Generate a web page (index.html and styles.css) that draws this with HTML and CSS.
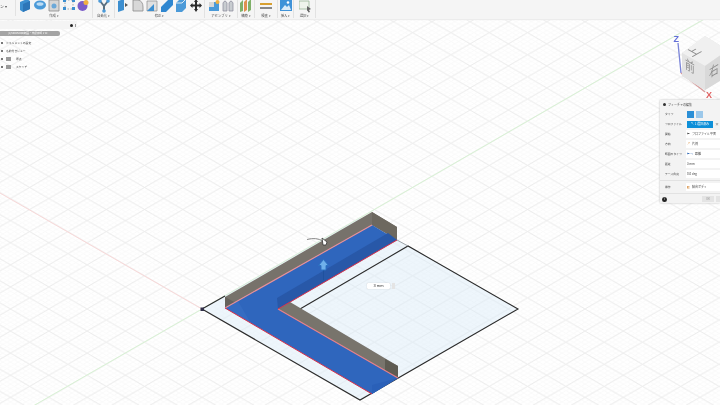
FILE: index.html
```html
<!DOCTYPE html>
<html lang="ja">
<head>
<meta charset="utf-8">
<title>フィーチャの編集</title>
<link rel="stylesheet" href="styles.css">
</head>
<body>
<div class="app">
  <svg class="canvas" viewBox="0 0 720 405" width="720" height="405">
    <defs>
      <pattern id="minor" patternUnits="userSpaceOnUse" x="202" y="309" width="7.66" height="4.42">
        <path d="M0 0L7.66 4.42M7.66 0L0 4.42" stroke="#f8f8f8" stroke-width=".8" fill="none"/>
      </pattern>
      <pattern id="major" patternUnits="userSpaceOnUse" x="202" y="309" width="38.3" height="22.1">
        <path d="M0 0L38.3 22.1M38.3 0L0 22.1" stroke="#ebebeb" stroke-width=".9" fill="none"/>
      </pattern>
    </defs>
    <rect width="720" height="405" fill="#fff"/>
    <rect width="720" height="405" fill="url(#minor)"/>
    <rect width="720" height="405" fill="url(#major)"/>
    <path d="M0 425L202 309L720 10" stroke="#d8f2d4" stroke-width="1" fill="none"/>
    <path d="M0 193L202 309" stroke="#f8d8d8" stroke-width="1" fill="none"/>

    <path d="M202 309L360 218L518 309L360 400Z" fill="#d6e9f9" fill-opacity=".42"/>
    <path d="M202 309L225 296M202 309L360 400L518 309L408 246L300 309" stroke="#2b2b2b" stroke-width="1.1" fill="none"/>
    <path d="M397 240L408 246" stroke="#8a8f94" stroke-width=".8" fill="none"/>
    <path d="M300 309L372 351" stroke="#c6d0d8" stroke-width=".7" fill="none"/>

    <path d="M225 297L372 212L397 227V240L372 225L225 308Z" fill="#77726b"/>
    <path d="M372 212L397 227V240L386 233L372 225Z" fill="#6d685f"/>
    <path d="M225 297L238 304L225 308Z" fill="#66625c"/>
    <path d="M278 309L290 302L398 366V378Z" fill="#78746c"/>
    <path d="M385 359L398 366V378L385 371Z" fill="#5e5b52"/>

    <path d="M225 308L372 225L397 240L278 309L398 378L372 394Z" fill="#2f66bd"/>
    <path d="M277 298L388 233L397 240L278 309Z" fill="#2858a8"/>
    <path d="M372 394V385L398 378Z" fill="#2a60b8"/>
    <path d="M225 308L238 301L250 322Z" fill="#3a70c4" fill-opacity=".6"/>

    <path d="M225 308L372 225" stroke="#e88f98" stroke-width="1.1" fill="none"/>
    <path d="M278 309L398 378" stroke="#e87f88" stroke-width="1.1" fill="none"/>
    <path d="M225 308L372 394M278 309L397 240" stroke="#d9304a" stroke-width="1" fill="none"/>

    <rect x="200.500" y="307.500" width="3.500" height="3.500" fill="#33304a"/>

    <path d="M307 239.500Q316 237 323 241" stroke="#888" stroke-width="1" fill="none"/>
    <path d="M322 238L327 242L326 245H323Z" fill="#fff" stroke="#333" stroke-width=".8"/>
    <path d="M323.500 270V280" stroke="#1d4f9c" stroke-width=".8"/>
    <path d="M323.500 259.500L328.500 265.500H326V270H321V265.500H318.500Z" fill="#6fb0ea" stroke="#2a6fc0" stroke-width=".9"/>

    <path d="M678 43L681 73" stroke="#7a84d8" stroke-width="1.300" fill="none"/>
    <path d="M681 73L705 92" stroke="#d99a9a" stroke-width="1.300" fill="none"/>
    <path d="M682 53L705 36L728 50V76L705 90L682 76Z" fill="#e4e4e4"/>
    <path d="M682 53L705 36L728 50L705 66Z" fill="#f0f0f0"/>
    <path d="M682 53L705 66V90L682 76Z" fill="#e3e3e3"/>
    <path d="M705 66L728 50V76L705 90Z" fill="#d9d9d9"/>
    <text class="axis axis-z" x="673.500" y="42">Z</text>
    <text class="axis axis-x" x="706" y="98">X</text>
    <text class="cube" transform="matrix(.8 -.45 .8 .45 697 54)">上</text>
    <text class="cube" transform="matrix(.75 .45 0 1 690 71)">前</text>
    <text class="cube" transform="matrix(.75 -.45 0 1 714 75)">右</text>
  </svg>

  <header class="toolbar">
    <div class="mode"><span class="mode-text">ン ▾</span></div>
    <section class="group g-create">
      <div class="icons">
        <svg class="ico" viewBox="0 0 12 14"><path d="M1 3L8 0L11 2V10L4 13L1 11Z" fill="#3d8fd0"/><path d="M4 5L11 2V10L4 13Z" fill="#2d76b8"/></svg>
        <svg class="ico" viewBox="0 0 12 14"><ellipse cx="6" cy="6" rx="6" ry="4.500" fill="#4b9ad8"/><ellipse cx="6" cy="5" rx="3.500" ry="1.800" fill="#bcdcf4"/></svg>
        <svg class="ico" viewBox="0 0 12 14"><path d="M1 1H11V12H1Z" fill="#d6d6d6" stroke="#8c8c8c" stroke-width=".8"/><circle cx="6" cy="7" r="2.500" fill="#6ba8d8"/></svg>
        <svg class="ico" viewBox="0 0 12 14"><path d="M2 1H10V10H2Z" fill="none" stroke="#777" stroke-width=".6" stroke-dasharray="1.500 1.500"/><path d="M0 0H3V3H0ZM9 0H12V3H9ZM0 8H3V11H0ZM9 8H12V11H9Z" fill="#3d8fd0"/></svg>
        <svg class="ico" viewBox="0 0 12 14"><circle cx="5.500" cy="7" r="5" fill="#7a5cc8"/><circle cx="9" cy="3.500" r="2.500" fill="#f0b040"/></svg>
      </div>
      <span class="lab">作成 ▾</span>
    </section>
    <section class="group g-auto">
      <div class="icons">
        <svg class="ico" viewBox="0 0 12 14"><path d="M2 2L6 7L10 2M6 7V12" stroke="#5a6f80" stroke-width="2" fill="none"/><circle cx="2" cy="2" r="1.800" fill="#4b9ad8"/><circle cx="10" cy="2" r="1.800" fill="#4b9ad8"/><circle cx="6" cy="12" r="1.800" fill="#4b9ad8"/></svg>
      </div>
      <span class="lab">自動化 ▾</span>
    </section>
    <section class="group g-modify">
      <div class="icons">
        <svg class="ico" viewBox="0 0 12 14"><path d="M1 2L7 0V11L1 13Z" fill="#3d8fd0"/><path d="M8 4L11 6L8 8Z" fill="#555"/></svg>
        <svg class="ico" viewBox="0 0 12 14"><path d="M1 1H6Q11 2 11 8V12H1Z" fill="#d8d8d8" stroke="#8c8c8c" stroke-width=".8"/></svg>
        <svg class="ico" viewBox="0 0 12 14"><path d="M1 2H11V12H1Z" fill="#e0e0e0" stroke="#8c8c8c" stroke-width=".7"/><path d="M1 12L8 5V12Z" fill="#3d8fd0"/></svg>
        <svg class="ico" viewBox="0 0 12 14"><path d="M0 8L7 1H12V6L5 13H0Z" fill="#2f87d0"/></svg>
        <svg class="ico" viewBox="0 0 12 14"><path d="M1 4L5 0H11V9L7 13H1Z" fill="#4b9ad8"/><path d="M1 4H7L11 0" stroke="#dfeaf3" fill="none"/></svg>
        <svg class="ico" viewBox="0 0 12 14"><path d="M6 0L8 3H7V5.500H9.500V4L12 6.500L9.500 9V7.500H7V10H8L6 13L4 10H5V7.500H2.500V9L0 6.500L2.500 4V5.500H5V3H4Z" fill="#2b2b2b"/></svg>
      </div>
      <span class="lab">修正 ▾</span>
    </section>
    <section class="group g-assemble">
      <div class="icons">
        <svg class="ico" viewBox="0 0 12 14"><path d="M1 3H11V12H1Z" fill="#4b9ad8"/><path d="M1 3H6V8H1Z" fill="#d8d8d8"/><circle cx="9.500" cy="3" r="2" fill="#f0b040"/></svg>
        <svg class="ico" viewBox="0 0 12 14"><path d="M1 4Q3 0 5 4V12H1ZM7 4Q9 0 11 4V12H7Z" fill="#c8ccd0" stroke="#889" stroke-width=".7"/></svg>
      </div>
      <span class="lab">アセンブリ ▾</span>
    </section>
    <section class="group g-build">
      <div class="icons">
        <svg class="ico" viewBox="0 0 12 14"><path d="M0 4L3 1V12L0 13Z" fill="#7fb069"/><path d="M4 3L7 0V11L4 13Z" fill="#e09050"/><path d="M8 3L11 0V11L8 13Z" fill="#7fb069"/></svg>
      </div>
      <span class="lab">構築 ▾</span>
    </section>
    <section class="group g-inspect">
      <div class="icons">
        <svg class="ico" viewBox="0 0 12 14"><path d="M0 4H12V6H0Z" fill="#d8a030"/><path d="M0 8H12V10H0Z" fill="#888"/></svg>
      </div>
      <span class="lab">検査 ▾</span>
    </section>
    <section class="group g-insert">
      <div class="icons">
        <svg class="ico" viewBox="0 0 12 14"><path d="M0 0H12V12H0Z" fill="#3f93d8"/><path d="M1 11L5 6L7 8L9 6L11 11Z" fill="#dcecf8"/><circle cx="8" cy="3.500" r="1.300" fill="#fff"/></svg>
      </div>
      <span class="lab">挿入 ▾</span>
    </section>
    <section class="group g-select">
      <div class="icons">
        <svg class="ico" viewBox="0 0 12 14"><path d="M0 2H10V10H0Z" fill="#eef4ec" stroke="#9ab89a" stroke-width=".8"/><path d="M8 7L12 10L10 11L11 13L9.500 13.500L8.500 11.500L8 12Z" fill="#666"/></svg>
      </div>
      <span class="lab">選択 ▾</span>
    </section>
  </header>

  <aside class="browser">
    <div class="search"><span class="dot"></span><span class="sep"></span></div>
    <div class="doc"><span class="doc-name">(1)600X600凹断面・未保存版 1 v2</span></div>
    <ul class="tree">
      <li class="node"><span class="eye"></span>ドキュメントの設定</li>
      <li class="node"><span class="eye"></span>名前付きビュー</li>
      <li class="node"><span class="eye"></span><span class="folder"></span>原点</li>
      <li class="node"><span class="eye"></span><span class="folder"></span>スケッチ</li>
    </ul>
  </aside>

  <div class="dim"><span class="dim-box">3 mm</span><span class="dim-end"></span></div>

  <aside class="panel">
    <div class="title"><span class="bullet"></span>フィーチャの編集</div>
    <div class="row"><span class="key">タイプ</span>
      <span class="val bare"><span class="type on"></span><span class="type"></span></span></div>
    <div class="row"><span class="key">プロファイル</span>
      <span class="val bare"><span class="chosen">↖ 1 選択済み</span><span class="cross">×</span></span></div>
    <div class="row"><span class="key">開始</span><span class="val"><i class="mini">⊢</i>プロファイル平面</span></div>
    <div class="row"><span class="key">方向</span><span class="val"><i class="mini warm">↗</i>片側</span></div>
    <div class="row"><span class="key">範囲のタイプ</span><span class="val"><i class="mini blue">⊢⊣</i>距離</span></div>
    <div class="row"><span class="key">距離</span><span class="val">3 mm</span></div>
    <div class="row"><span class="key">テーパ角度</span><span class="val">0.0 deg</span></div>
    <div class="rule"></div>
    <div class="row"><span class="key">操作</span><span class="val"><i class="mini warm">◧</i>結合ボディ</span></div>
    <div class="rule"></div>
    <div class="foot"><span class="info">i</span><span class="ok">OK</span><span class="cancel"></span></div>
  </aside>
</div>
</body>
</html>
```
FILE: styles.css
```css
html, body {
  margin: 0;
  padding: 0;
  background: #fff;
}
.app {
  position: relative;
  width: 720px;
  height: 405px;
  overflow: hidden;
  font-family: "Noto Sans CJK JP", "Noto Sans", sans-serif;
}
.canvas {
  position: absolute;
  inset: 0;
  display: block;
  filter: blur(.55px);
}
.axis {
  font: 700 9px "Liberation Sans", sans-serif;
}
.axis-z { fill: #6470d8; }
.axis-x { fill: #e06060; }
.cube {
  font: 400 13px "Noto Sans CJK JP", sans-serif;
  fill: #8a8a8a;
  text-anchor: middle;
}

.toolbar {
  position: absolute;
  top: 0;
  left: 0;
  width: 720px;
  height: 19px;
  background: #f5f5f5;
  display: flex;
  align-items: flex-start;
  filter: blur(.55px);
  box-shadow: 0 1px 1px #ececec;
}
.mode {
  width: 16px;
  height: 16px;
  border-right: 1px solid #e2e2e2;
  font-size: 4px;
  color: #555;
  overflow: hidden;
  box-sizing: border-box;
  padding-top: 3px;
  white-space: nowrap;
}
.group {
  display: flex;
  flex-direction: column;
  align-items: center;
  flex: none;
  height: 18px;
  border-right: 1px solid #e2e2e2;
  box-sizing: border-box;
}
.g-create { width: 77px; }
.g-auto { width: 22px; }
.g-modify { width: 90px; }
.g-assemble { width: 33px; }
.g-build { width: 17px; }
.g-inspect { width: 23px; }
.g-insert { width: 16px; }
.g-select { width: 22px; }
.icons {
  display: flex;
  gap: 2.5px;
  height: 14px;
  margin-top: -1px;
}
.ico {
  width: 12px;
  height: 14px;
  display: block;
}
.lab {
  font-size: 3.4px;
  line-height: 5px;
  color: #555;
  white-space: nowrap;
}

.browser {
  position: absolute;
  top: 21px;
  left: 0;
  width: 78px;
  font-size: 2.8px;
  color: #444;
  filter: blur(.35px);
}
.search {
  height: 8px;
  background: #f4f4f4;
  display: flex;
  align-items: center;
  justify-content: flex-end;
  gap: 2px;
  padding-right: 1px;
  width: 76px;
}
.dot {
  width: 3px;
  height: 3px;
  border-radius: 50%;
  background: #222;
}
.sep {
  width: 1px;
  height: 3px;
  background: #999;
}
.doc {
  width: 60px;
  height: 5px;
  margin-top: 2px;
  background: #a4a4a4;
  color: #fff;
  line-height: 5px;
  white-space: nowrap;
  overflow: hidden;
  padding-left: 8px;
  box-sizing: border-box;
  border-radius: 0 2px 2px 0;
}
.doc-name {
  font-size: 2.6px;
}
.tree {
  list-style: none;
  margin: 3px 0 0;
  padding: 0;
}
.node {
  height: 8px;
  display: flex;
  align-items: center;
  gap: 1px;
  padding-left: 1px;
  white-space: nowrap;
}
.eye {
  width: 2px;
  height: 2px;
  margin-right: 2px;
  background: #777;
}
.folder {
  width: 5px;
  height: 4px;
  margin-right: 4px;
  background: #9a9a9a;
}

.dim {
  position: absolute;
  left: 367px;
  top: 283px;
  display: flex;
  gap: 2px;
  filter: blur(.3px);
}
.dim-box {
  width: 23px;
  height: 6px;
  background: #fff;
  border-radius: 1px;
  box-shadow: 0 0 1px #aaa;
  font: 4px/6px "Liberation Sans", sans-serif;
  text-align: center;
  color: #333;
}
.dim-end {
  width: 3px;
  height: 6px;
  background: #e4e4e4;
}

.panel {
  position: absolute;
  left: 660px;
  top: 100px;
  width: 60px;
  height: 103px;
  background: #f3f3f3;
  box-shadow: 0 0 2px #bbb;
  font-size: 3px;
  color: #444;
  box-sizing: border-box;
  display: flex;
  flex-direction: column;
  filter: blur(.35px);
}
.title {
  height: 9px;
  display: flex;
  align-items: center;
  gap: 2px;
  padding-left: 3px;
  flex: none;
}
.bullet {
  width: 3px;
  height: 3px;
  background: #333;
  border-radius: 50%;
}
.row {
  height: 10px;
  flex: none;
  display: flex;
  align-items: center;
  padding-left: 5px;
}
.key {
  width: 21px;
  flex: none;
  white-space: nowrap;
  font-size: 2.8px;
}
.val {
  flex: 1;
  height: 8px;
  background: #fff;
  display: flex;
  align-items: center;
  gap: 1px;
  padding-left: 1px;
  white-space: nowrap;
  overflow: hidden;
}
.val.bare {
  background: none;
  gap: 2px;
}
.mini {
  font-style: normal;
  color: #555;
  margin-right: 1px;
}
.warm { color: #d68a3a; }
.blue { color: #3a6fb8; }
.type {
  width: 7px;
  height: 7px;
  background: #9cc8ea;
}
.type.on {
  background: #2b8fd6;
}
.chosen {
  width: 26px;
  height: 7px;
  background: #0d8fd8;
  color: #fff;
  font-size: 3px;
  line-height: 7px;
  text-align: center;
  white-space: nowrap;
  overflow: hidden;
}
.cross {
  font-size: 4px;
}
.rule {
  height: 1px;
  margin: 1px 0;
  background: #e2e2e2;
  flex: none;
}
.foot {
  display: flex;
  align-items: center;
  height: 10px;
  padding-left: 2px;
  gap: 2px;
}
.info {
  width: 5px;
  height: 5px;
  line-height: 5px;
  border-radius: 50%;
  background: #222;
  color: #fff;
  font-size: 3px;
  text-align: center;
  margin-right: 33px;
}
.ok {
  width: 13px;
  height: 6px;
  line-height: 6px;
  text-align: center;
  background: #e4e4e4;
  color: #999;
}
.cancel {
  width: 4px;
  height: 6px;
  background: #e4e4e4;
}
```
